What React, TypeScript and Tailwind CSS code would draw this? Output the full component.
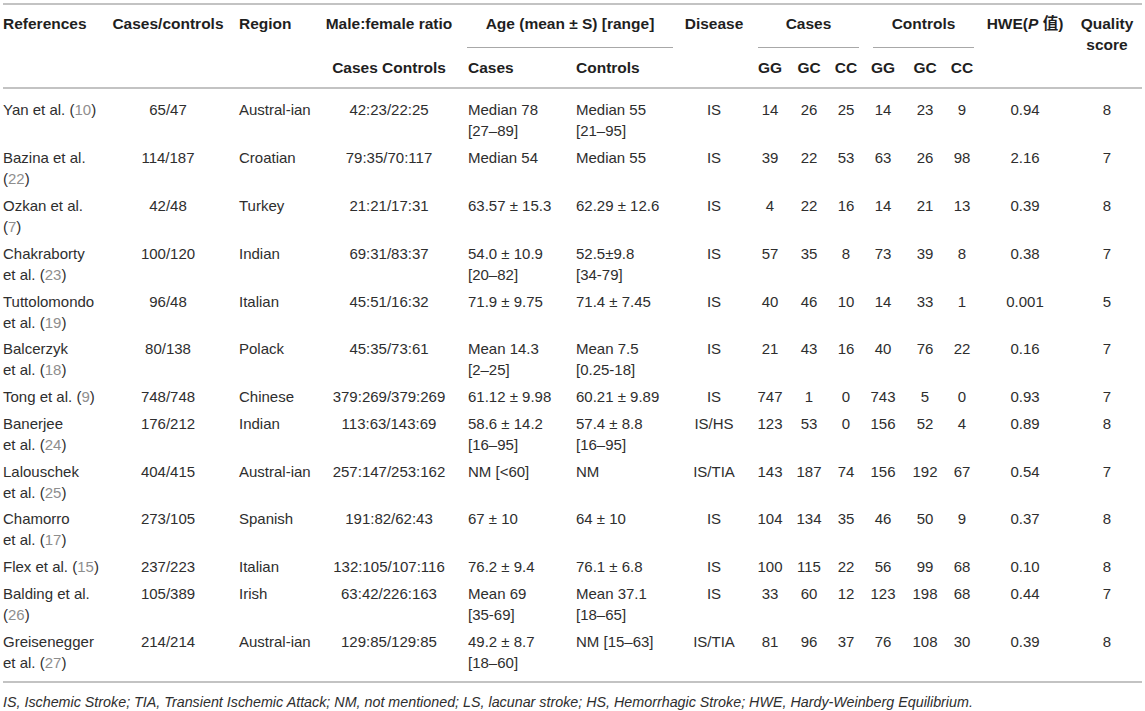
import React from 'react';

interface Ref {
  first: string;
  second?: string;
  n: string;
}

interface Row {
  ref: Ref;
  cc: string;
  region: string;
  ratio: string;
  ageCases: string[];
  ageControls: string[];
  disease: string;
  geno: string[];
  hwe: string;
  q: string;
}

const rows: Row[] = [
  { ref: { first: 'Yan et al. ', n: '10' }, cc: '65/47', region: 'Austral-ian', ratio: '42:23/22:25', ageCases: ['Median 78', '[27–89]'], ageControls: ['Median 55', '[21–95]'], disease: 'IS', geno: ['14', '26', '25', '14', '23', '9'], hwe: '0.94', q: '8' },
  { ref: { first: 'Bazina et al.', second: '', n: '22' }, cc: '114/187', region: 'Croatian', ratio: '79:35/70:117', ageCases: ['Median 54'], ageControls: ['Median 55'], disease: 'IS', geno: ['39', '22', '53', '63', '26', '98'], hwe: '2.16', q: '7' },
  { ref: { first: 'Ozkan et al.', second: '', n: '7' }, cc: '42/48', region: 'Turkey', ratio: '21:21/17:31', ageCases: ['63.57 ± 15.3'], ageControls: ['62.29 ± 12.6'], disease: 'IS', geno: ['4', '22', '16', '14', '21', '13'], hwe: '0.39', q: '8' },
  { ref: { first: 'Chakraborty', second: 'et al. ', n: '23' }, cc: '100/120', region: 'Indian', ratio: '69:31/83:37', ageCases: ['54.0 ± 10.9', '[20–82]'], ageControls: ['52.5±9.8', '[34-79]'], disease: 'IS', geno: ['57', '35', '8', '73', '39', '8'], hwe: '0.38', q: '7' },
  { ref: { first: 'Tuttolomondo', second: 'et al. ', n: '19' }, cc: '96/48', region: 'Italian', ratio: '45:51/16:32', ageCases: ['71.9 ± 9.75'], ageControls: ['71.4 ± 7.45'], disease: 'IS', geno: ['40', '46', '10', '14', '33', '1'], hwe: '0.001', q: '5' },
  { ref: { first: 'Balcerzyk', second: 'et al. ', n: '18' }, cc: '80/138', region: 'Polack', ratio: '45:35/73:61', ageCases: ['Mean 14.3', '[2–25]'], ageControls: ['Mean 7.5', '[0.25-18]'], disease: 'IS', geno: ['21', '43', '16', '40', '76', '22'], hwe: '0.16', q: '7' },
  { ref: { first: 'Tong et al. ', n: '9' }, cc: '748/748', region: 'Chinese', ratio: '379:269/379:269', ageCases: ['61.12 ± 9.98'], ageControls: ['60.21 ± 9.89'], disease: 'IS', geno: ['747', '1', '0', '743', '5', '0'], hwe: '0.93', q: '7' },
  { ref: { first: 'Banerjee', second: 'et al. ', n: '24' }, cc: '176/212', region: 'Indian', ratio: '113:63/143:69', ageCases: ['58.6 ± 14.2', '[16–95]'], ageControls: ['57.4 ± 8.8', '[16–95]'], disease: 'IS/HS', geno: ['123', '53', '0', '156', '52', '4'], hwe: '0.89', q: '8' },
  { ref: { first: 'Lalouschek', second: 'et al. ', n: '25' }, cc: '404/415', region: 'Austral-ian', ratio: '257:147/253:162', ageCases: ['NM [<60]'], ageControls: ['NM'], disease: 'IS/TIA', geno: ['143', '187', '74', '156', '192', '67'], hwe: '0.54', q: '7' },
  { ref: { first: 'Chamorro', second: 'et al. ', n: '17' }, cc: '273/105', region: 'Spanish', ratio: '191:82/62:43', ageCases: ['67 ± 10'], ageControls: ['64 ± 10'], disease: 'IS', geno: ['104', '134', '35', '46', '50', '9'], hwe: '0.37', q: '8' },
  { ref: { first: 'Flex et al. ', n: '15' }, cc: '237/223', region: 'Italian', ratio: '132:105/107:116', ageCases: ['76.2 ± 9.4'], ageControls: ['76.1 ± 6.8'], disease: 'IS', geno: ['100', '115', '22', '56', '99', '68'], hwe: '0.10', q: '8' },
  { ref: { first: 'Balding et al.', second: '', n: '26' }, cc: '105/389', region: 'Irish', ratio: '63:42/226:163', ageCases: ['Mean 69', '[35-69]'], ageControls: ['Mean 37.1', '[18–65]'], disease: 'IS', geno: ['33', '60', '12', '123', '198', '68'], hwe: '0.44', q: '7' },
  { ref: { first: 'Greisenegger', second: 'et al. ', n: '27' }, cc: '214/214', region: 'Austral-ian', ratio: '129:85/129:85', ageCases: ['49.2 ± 8.7', '[18–60]'], ageControls: ['NM [15–63]'], disease: 'IS/TIA', geno: ['81', '96', '37', '76', '108', '30'], hwe: '0.39', q: '8' },
];

const grid =
  'grid grid-cols-[108px_114px_98px_132px_121px_97px_82px_30px_48px_26px_48px_36px_38px_88px_76px]';

function RefCell({ r }: { r: Ref }) {
  const num = <span className="text-[#8e8e8e]">{r.n}</span>;
  if (r.second === undefined) {
    return (
      <div>
        {r.first}({num})
      </div>
    );
  }
  return (
    <>
      <div>{r.first}</div>
      <div>
        {r.second}({num})
      </div>
    </>
  );
}

export default function App() {
  return (
    <div className="h-[711px] w-[1145px] overflow-hidden bg-white pl-[3px] font-['Liberation_Sans','Noto_Sans_CJK_SC',Arial,sans-serif] text-[#2e2e2e]">
      <div className="mt-[3px] h-[2px] w-[1139px] bg-[#c3c3c3]" />

      {/* header */}
      <div className={`${grid} pt-[7.5px] text-[15.5px] leading-[21px] font-bold whitespace-nowrap text-[#1f1f1f]`}>
        <div className="col-start-1 row-start-1 row-span-2">References</div>
        <div className="col-start-2 row-start-1 row-span-2 text-center">Cases/controls</div>
        <div className="col-start-3 row-start-1 row-span-2 pl-[14px]">Region</div>
        <div className="col-start-4 row-start-1 text-center">Male:female ratio</div>
        <div className="col-start-5 col-span-2 row-start-1 ml-[12px] border-b border-[#a8a8a8] pb-[13px] text-center">
          Age (mean ± S) [range]
        </div>
        <div className="col-start-7 row-start-1 row-span-2 text-center">Disease</div>
        <div className="col-start-8 col-span-3 row-start-1 ml-[3px] border-b border-[#a8a8a8] pb-[13px] text-center">
          Cases
        </div>
        <div className="col-start-11 col-span-3 row-start-1 ml-[14px] mr-[7px] border-b border-[#a8a8a8] pb-[13px] text-center">
          Controls
        </div>
        <div className="col-start-14 row-start-1 row-span-2 text-center">
          HWE(<i>P</i> 值)
        </div>
        <div className="col-start-15 row-start-1 row-span-2 text-center">
          Quality
          <br />
          score
        </div>

        <div className="col-start-4 row-start-2 pt-[9px] pb-[9.5px] text-center">Cases Controls</div>
        <div className="col-start-5 row-start-2 pt-[9px] pl-[13px]">Cases</div>
        <div className="col-start-6 row-start-2 pt-[9px]">Controls</div>
        <div className="col-start-8 row-start-2 pt-[9px] text-center">GG</div>
        <div className="col-start-9 row-start-2 pt-[9px] text-center">GC</div>
        <div className="col-start-10 row-start-2 pt-[9px] text-center">CC</div>
        <div className="col-start-11 row-start-2 pt-[9px] text-center">GG</div>
        <div className="col-start-12 row-start-2 pt-[9px] text-center">GC</div>
        <div className="col-start-13 row-start-2 pt-[9px] text-center">CC</div>
      </div>

      <div className="h-[2px] w-[1139px] bg-[#c3c3c3]" />

      {/* body */}
      <div className="pt-[7.5px] pb-[5px] text-[15px] leading-[21px] whitespace-nowrap">
        {rows.map((r, i) => (
          <div key={i} className={`${grid} [&>div]:py-[2.9px]`}>
            <div>
              <RefCell r={r.ref} />
            </div>
            <div className="text-center">{r.cc}</div>
            <div className="pl-[14px]">{r.region}</div>
            <div className="text-center">{r.ratio}</div>
            <div className="pl-[13px]">
              {r.ageCases.map((l, j) => (
                <div key={j}>{l}</div>
              ))}
            </div>
            <div>
              {r.ageControls.map((l, j) => (
                <div key={j}>{l}</div>
              ))}
            </div>
            <div className="text-center">{r.disease}</div>
            {r.geno.map((g, j) => (
              <div key={j} className="text-center">
                {g}
              </div>
            ))}
            <div className="text-center">{r.hwe}</div>
            <div className="text-center">{r.q}</div>
          </div>
        ))}
      </div>

      <div className="h-[2px] w-[1139px] bg-[#c3c3c3]" />

      <p className="mt-[11px] text-[14.3px] leading-[16px] italic whitespace-nowrap">
        IS, Ischemic Stroke; TIA, Transient Ischemic Attack; NM, not mentioned; LS, lacunar stroke; HS, Hemorrhagic
        Stroke; HWE, Hardy-Weinberg Equilibrium.
      </p>
    </div>
  );
}
